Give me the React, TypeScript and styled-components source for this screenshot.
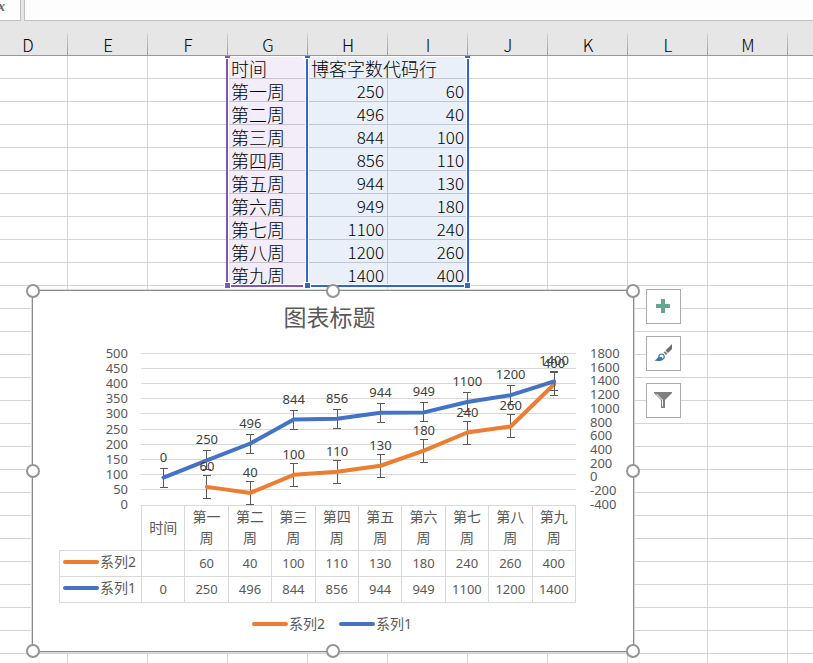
import React from "react";
import styled, { createGlobalStyle, css } from "styled-components";

const GlobalStyle = createGlobalStyle`
  * { box-sizing: border-box; }
  body {
    margin: 0;
    background: #fff;
    color: #000;
    font-family: "Open Sans", "Noto Sans CJK SC", sans-serif;
  }
`;

const PURPLE = "#8057b8";
const BLUE = "#2f68c6";
const ORANGE_LINE = "#ed7d31";
const BLUE_LINE = "#4472c4";
const GRID = "#d9d9d9";
const INK = "#595959";

const Page = styled.main`
  height: 100vh;
  overflow: hidden;
`;

const FormulaBar = styled.div`
  display: flex;
  gap: 3px;
  height: 21px;
  background: #e6e6e6;
`;

const FunctionButton = styled.button`
  width: 21px;
  padding: 0 0 6px;
  border: 0;
  border-right: 1px solid #c0c0c0;
  border-bottom: 1px solid #c0c0c0;
  background: #fdfdfd;
  color: #666;
  font: italic 700 14px/12px "Liberation Serif", serif;
  text-align: left;
  text-indent: -2px;
`;

const FormulaInput = styled.input`
  flex: 1;
  min-width: 0;
  padding: 0 4px;
  border: 0;
  border-left: 1px solid #c0c0c0;
  border-bottom: 1px solid #c0c0c0;
  background: #fdfdfd;
  outline: 0;
`;

const SheetArea = styled.div`
  position: relative;
`;

const SheetTable = styled.table`
  width: 880px;
  margin-left: -12px;
  table-layout: fixed;
  border-collapse: separate;
  border-spacing: 0;
`;

const ColumnHead = styled.th`
  height: 35px;
  padding: 14px 0 0;
  border-bottom: 1px solid #999;
  background: linear-gradient(#d4d4d4, #999) right bottom / 1px 22px no-repeat #e6e6e6;
  font-family: "Noto Sans CJK SC", sans-serif;
  font-size: 17px;
  line-height: 20px;
  font-weight: 300;
  color: #000;
`;

type Tone = "plain" | "purple" | "blue";

const Cell = styled.td<{ $tone: Tone; $number?: boolean }>`
  height: 23px;
  padding: 2px 3px 0;
  border-right: 1px solid #d4d4d4;
  border-bottom: 1px solid #d4d4d4;
  font-family: "Noto Sans CJK SC", sans-serif;
  font-weight: 300;
  font-size: 18px;
  line-height: 20px;
  white-space: nowrap;
  ${(p) =>
    p.$number &&
    css`
      font-size: 17px;
      text-align: right;
    `}
  ${(p) => p.$tone === "purple" && "background: #f2edf8; border-color: #c9c1d2;"}
  ${(p) => p.$tone === "blue" && "background: #e9f0f9; border-color: #bfc7d3;"}
`;

const Range = styled.div<{ $left: number; $width: number; $color: string }>`
  position: absolute;
  left: ${(p) => p.$left}px;
  top: 35px;
  width: ${(p) => p.$width}px;
  height: 231px;
  border: solid ${(p) => p.$color};
  border-width: 0 2px 2px;
  box-shadow: inset 0 0 0 1px #fff;
`;

const RangeHandle = styled.i<{ $side: "left" | "right"; $end: "top" | "bottom"; $color: string }>`
  position: absolute;
  ${(p) => p.$side}: -4px;
  ${(p) => (p.$end === "top" ? "top: 0; height: 3px;" : "bottom: -4px; height: 7px;")}
  width: 7px;
  border: 1px solid #fff;
  border-top-width: ${(p) => (p.$end === "top" ? 0 : 1)}px;
  background: ${(p) => p.$color};
`;

const ChartFrame = styled.section`
  position: absolute;
  left: 32px;
  top: 269px;
  width: 602px;
  border: 1px solid #8c8c8c;
  box-shadow: 0 0 0 1px #d9d9d9;
  background: #fff;
  color: ${INK};
  font-family: "Noto Sans", "Noto Sans CJK SC", sans-serif;
`;

const ChartTitle = styled.h2`
  margin: 0;
  padding: 5px 7px 5px 0;
  font: 400 23px/40px "Noto Sans CJK SC", sans-serif;
  text-align: center;
`;

const Plot = styled.svg`
  display: block;
  width: 100%;
  overflow: visible;
  position: relative;
  font-size: 13px;
`;

const DataTable = styled.table`
  width: 517px;
  margin-left: 26px;
  table-layout: fixed;
  border-collapse: collapse;
  font-size: 13px;
  line-height: 21px;
`;

const SeriesColumn = styled.col`
  width: 82px;
`;

const Blank = styled.td`
  padding: 0;
`;

const DataHead = styled.th`
  height: 45px;
  padding: 0 0 2px;
  border: 1px solid ${GRID};
  font: 400 14px/21px "Noto Sans CJK SC", sans-serif;
`;

const SeriesHead = styled.th`
  height: 26px;
  padding: 0 0 4px 3px;
  border: 1px solid ${GRID};
  font-weight: 400;
`;

const DataCell = styled.td`
  height: 26px;
  padding: 0;
  border: 1px solid ${GRID};
  text-align: center;
`;

const Key = styled.span`
  display: flex;
  align-items: center;
  gap: 1px;
  font: 400 14px/21px "Noto Sans", "Noto Sans CJK SC", sans-serif;
  white-space: nowrap;
`;

const Swatch = styled.i<{ $color: string }>`
  width: 36px;
  height: 4px;
  border-radius: 2px;
  background: ${(p) => p.$color};
`;

const Legend = styled.div`
  display: flex;
  justify-content: center;
  gap: 14px;
  height: 48px;
  padding: 0 2px 7px 0;
`;

const Knob = styled.i<{ $x: number; $y: number }>`
  position: absolute;
  left: calc(${(p) => p.$x}% - 7px);
  top: calc(${(p) => p.$y}% - 7px);
  width: 14px;
  height: 14px;
  border: 2px solid #949494;
  border-radius: 50%;
  background: #fff;
`;

const ChartTools = styled.div`
  position: absolute;
  left: 646px;
  top: 268px;
  display: grid;
  gap: 12px;
`;

const ToolButton = styled.button`
  display: grid;
  place-items: center;
  width: 35px;
  height: 35px;
  padding: 0 1px 1px 0;
  border: 1px solid #ababab;
  background: #fff;
`;

const columns = ["D", "E", "F", "G", "H", "I", "J", "K", "L", "M", ""];
const weeks = ["第一周", "第二周", "第三周", "第四周", "第五周", "第六周", "第七周", "第八周", "第九周"];
const words = [250, 496, 844, 856, 944, 949, 1100, 1200, 1400];
const codes = [60, 40, 100, 110, 130, 180, 240, 260, 400];
const blankRows = Array.from({ length: 18 }, (_, i) => i);

function Blanks({ count }: { count: number }) {
  return (
    <>
      {Array.from({ length: count }, (_, i) => (
        <Cell key={i} $tone="plain" />
      ))}
    </>
  );
}

function Sheet() {
  return (
    <SheetTable>
      <thead>
        <tr>
          {columns.map((c) => (
            <ColumnHead key={c} scope="col">{c}</ColumnHead>
          ))}
        </tr>
      </thead>
      <tbody>
        <tr>
          <Blanks count={3} />
          <Cell $tone="purple">时间</Cell>
          <Cell $tone="blue" colSpan={2}>博客字数代码行</Cell>
          <Blanks count={5} />
        </tr>
        {weeks.map((week, i) => (
          <tr key={week}>
            <Blanks count={3} />
            <Cell $tone="purple">{week}</Cell>
            <Cell $tone="blue" $number>{words[i]}</Cell>
            <Cell $tone="blue" $number>{codes[i]}</Cell>
            <Blanks count={5} />
          </tr>
        ))}
        {blankRows.map((r) => (
          <tr key={r}>
            <Blanks count={11} />
          </tr>
        ))}
      </tbody>
    </SheetTable>
  );
}

function SelectedRange({ left, width, color }: { left: number; width: number; color: string }) {
  return (
    <Range $left={left} $width={width} $color={color}>
      <RangeHandle $side="left" $end="top" $color={color} />
      <RangeHandle $side="right" $end="top" $color={color} />
      <RangeHandle $side="left" $end="bottom" $color={color} />
      <RangeHandle $side="right" $end="bottom" $color={color} />
    </Range>
  );
}

const BOTTOM = 164;
const TOP = 13;
const pointX = (i: number) => 130.5 + 43.4 * i;
const scaleY = (v: number, min: number, max: number) =>
  BOTTOM - ((v - min) / (max - min)) * (BOTTOM - TOP);

type Point = { x: number; y: number; value: number };
const series1: Point[] = [0, ...words].map((value, i) => ({ x: pointX(i), y: scaleY(value, -400, 1800), value }));
const series2: Point[] = codes.map((value, i) => ({ x: pointX(i + 1), y: scaleY(value, 0, 500), value }));

function ErrorBars({ points, reach }: { points: Point[]; reach: number }) {
  return (
    <g stroke={INK} fill="none" shapeRendering="crispEdges">
      {points.map((p) => (
        <path key={p.x} d={`M${p.x - 4} ${p.y - reach}h8M${p.x} ${p.y - reach}v${reach * 2}M${p.x - 4} ${p.y + reach}h8`} />
      ))}
    </g>
  );
}

function Line({ points, color }: { points: Point[]; color: string }) {
  return (
    <polyline
      points={points.map((p) => `${p.x},${p.y}`).join(" ")}
      fill="none"
      stroke={color}
      strokeWidth="4"
      strokeLinecap="round"
      strokeLinejoin="round"
    />
  );
}

function Labels({ points }: { points: Point[] }) {
  return (
    <g fill="#404040" textAnchor="middle">
      {points.map((p) => (
        <text key={p.x} x={p.x} y={p.y - 16}>{p.value}</text>
      ))}
    </g>
  );
}

function LinePlot() {
  return (
    <Plot viewBox="0 0 600 164" role="img" aria-label="图表标题">
      <g stroke={GRID} shapeRendering="crispEdges">
        {Array.from({ length: 10 }, (_, i) => {
          const y = Math.round(TOP + i * 15.1) - 0.5;
          return <line key={i} x1="108" x2="543" y1={y} y2={y} />;
        })}
      </g>
      <g fill={INK} textAnchor="end">
        {Array.from({ length: 11 }, (_, i) => (
          <text key={i} x="95" y={TOP + 4 + i * 15.1}>{500 - i * 50}</text>
        ))}
      </g>
      <g fill={INK}>
        {Array.from({ length: 12 }, (_, i) => (
          <text key={i} x="557" y={TOP + 4 + i * 13.7}>{1800 - i * 200}</text>
        ))}
      </g>
      <ErrorBars points={series2} reach={11.5} />
      <Line points={series2} color={ORANGE_LINE} />
      <ErrorBars points={series1} reach={9.5} />
      <Line points={series1} color={BLUE_LINE} />
      <Labels points={series2} />
      <Labels points={series1} />
    </Plot>
  );
}

function SeriesKey({ name, color }: { name: string; color: string }) {
  return (
    <Key>
      <Swatch $color={color} />
      {name}
    </Key>
  );
}

function Chart() {
  return (
    <ChartFrame>
      <ChartTitle>图表标题</ChartTitle>
      <LinePlot />
      <DataTable>
        <colgroup>
          <SeriesColumn />
          <col span={10} />
        </colgroup>
        <thead>
          <tr>
            <Blank />
            <DataHead scope="col">时间</DataHead>
            {weeks.map((w) => (
              <DataHead key={w} scope="col">{w.slice(0, 2)}<br />{w.slice(2)}</DataHead>
            ))}
          </tr>
        </thead>
        <tbody>
          <tr>
            <SeriesHead scope="row"><SeriesKey name="系列2" color={ORANGE_LINE} /></SeriesHead>
            <DataCell />
            {codes.map((v) => <DataCell key={v}>{v}</DataCell>)}
          </tr>
          <tr>
            <SeriesHead scope="row"><SeriesKey name="系列1" color={BLUE_LINE} /></SeriesHead>
            {[0, ...words].map((v) => <DataCell key={v}>{v}</DataCell>)}
          </tr>
        </tbody>
      </DataTable>
      <Legend>
        <SeriesKey name="系列2" color={ORANGE_LINE} />
        <SeriesKey name="系列1" color={BLUE_LINE} />
      </Legend>
      {[[0, 0], [50, 0], [100, 0], [0, 50], [100, 50], [0, 100], [50, 100], [100, 100]].map(([x, y]) => (
        <Knob key={`${x}-${y}`} $x={x} $y={y} />
      ))}
    </ChartFrame>
  );
}

function Tools() {
  return (
    <ChartTools>
      <ToolButton type="button" aria-label="图表元素">
        <svg width="14" height="14" viewBox="0 0 14 14">
          <path d="M5 0h4v5h5v4H9v5H5V9H0V5h5z" fill="#68a490" />
        </svg>
      </ToolButton>
      <ToolButton type="button" aria-label="图表样式">
        <svg width="18" height="18" viewBox="0 0 18 18">
          <path d="M18 0v5l-4 4-2.500-2.500z" fill="#6d6d6d" />
          <path d="M11 7.200l2.500 2.500-1.500 1.300-2.500-2.500z" fill="#7d7d7d" />
          <path d="M0 16.500c2-.5 3.500-2 4.500-4L8.500 16c-2 1.200-5.500 1.200-8.500.5z" fill="#3b76b0" />
          <path d="M4.800 13c0-2.500 2.200-3.700 4.200-2.500 2 1.500 1.500 4-.5 5z" fill="#fff" stroke="#3b76b0" strokeWidth="1.200" />
          <path d="M4 13.500c1.500-.8 2.500.2 4-.5l.5 2.500-2.500 1.200-4-.5z" fill="#3b76b0" />
        </svg>
      </ToolButton>
      <ToolButton type="button" aria-label="图表筛选器">
        <svg width="18" height="16" viewBox="0 0 18 16">
          <path d="M0 0h18v1l-7 7v8H7V8L0 1z" fill="#7f7f7f" />
          <path d="M2.500 2l6 6v6.500" fill="none" stroke="#fff" />
        </svg>
      </ToolButton>
    </ChartTools>
  );
}

export default function App() {
  return (
    <Page>
      <GlobalStyle />
      <FormulaBar>
        <FunctionButton type="button" aria-label="插入函数">x</FunctionButton>
        <FormulaInput aria-label="编辑栏" />
      </FormulaBar>
      <SheetArea>
        <Sheet />
        <SelectedRange left={226} width={82} color={PURPLE} />
        <SelectedRange left={306} width={163} color={BLUE} />
        <Chart />
        <Tools />
      </SheetArea>
    </Page>
  );
}
